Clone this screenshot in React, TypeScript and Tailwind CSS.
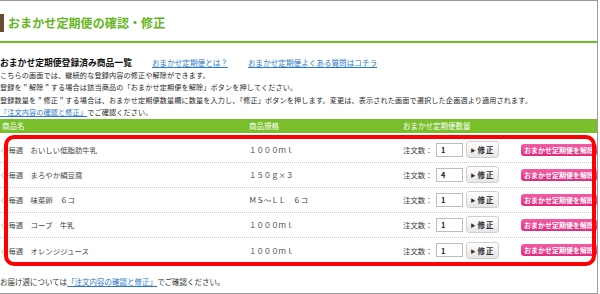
import React from 'react'

const rows = [
  { name: 'おいしい低脂肪牛乳', spec: '１０００ｍｌ', qty: '1' },
  { name: 'まろやか絹豆腐', spec: '１５０ｇ×３', qty: '4' },
  { name: '味菜卵　６コ', spec: 'ＭＳ～ＬＬ　６コ', qty: '1' },
  { name: 'コープ　牛乳', spec: '１０００ｍｌ', qty: '1' },
  { name: 'オレンジジュース', spec: '１０００ｍｌ', qty: '1' },
]

const font = { fontFamily: '"Noto Sans CJK JP", "Noto Sans", sans-serif' }

export default function App() {
  return (
    <div
      className="relative h-[294px] w-[598px] overflow-hidden border-t border-r border-b border-[#9a9a9a] bg-white text-[#333]"
      style={font}
    >
      {/* title */}
      <div className="flex h-[42px] items-start border-b-2 border-[#6cc21c] pt-[13px]">
        <div className="h-[18px] w-[4px] bg-[#6b4b30]" />
        <h1 className="ml-[4px] text-[12px] font-bold leading-[18px] tracking-[0.1px] text-[#63b521]">
          おまかせ定期便の確認・修正
        </h1>
      </div>

      {/* intro */}
      <div className="mt-[13px] flex h-[14px] items-center">
        <h2 className="w-[152px] text-[8.8px] font-bold leading-[14px] text-[#111]">おまかせ定期便登録済み商品一覧</h2>
        <a className="w-[96px] text-[7.6px] leading-[14px] text-[#2a78c8] underline">おまかせ定期便とは？</a>
        <a className="text-[7.6px] leading-[14px] text-[#2a78c8] underline">おまかせ定期便よくある質問はコチラ</a>
      </div>
      <div className="-mt-[1.5px] text-[7.15px] leading-[12.6px] tracking-[0.12px] whitespace-nowrap text-[#2a2a2a]">
        <p>こちらの画面では、継続的な登録内容の修正や解除ができます。</p>
        <p>登録を＂解除＂する場合は該当商品の「おまかせ定期便を解除」ボタンを押してください。</p>
        <p>登録数量を＂修正＂する場合は、おまかせ定期便数量欄に数量を入力し、「修正」ボタンを押します。変更は、表示された画面で選択した企画週より適用されます。</p>
        <p>
          <a className="text-[#2a78c8] underline">「注文内容の確認と修正」</a>でご確認ください。
        </p>
      </div>

      {/* table header */}
      <div className="flex h-[14px] items-center bg-[#78bf2b] text-[7.5px] leading-[14px] text-white">
        <div className="w-[249px] pl-[2px]">商品名</div>
        <div className="w-[154px]">商品規格</div>
        <div>おまかせ定期便数量</div>
      </div>

      {/* rows */}
      <div className="pt-[5px]">
        {rows.map((r, i) => (
          <div
            key={i}
            className={`flex h-[25px] items-center text-[7.4px] text-[#444] ${
              i < rows.length - 1 ? 'border-b border-dotted border-[#c8c8c8]' : ''
            }`}
          >
            <div className="w-[249px] whitespace-nowrap pl-[1px]">◇毎週　{r.name}</div>
            <div className="w-[154px] whitespace-nowrap">{r.spec}</div>
            <div className="flex items-center">
              <span className="w-[33px] whitespace-nowrap">注文数：</span>
              <div className="flex h-[14px] w-[27px] items-center border border-[#bdbdbd] bg-white pl-[4px] font-bold text-[#222]">
                {r.qty}
              </div>
              <button className="ml-[3px] flex h-[17px] w-[33px] items-center justify-center rounded-[3px] border border-[#cfcfcf] bg-gradient-to-b from-white to-[#e6e6e6] text-[7.5px] font-bold tracking-[1px] text-[#333]">
                <span className="mr-[1px] text-[5px]">▶</span>修正
              </button>
              <button className="ml-[22px] h-[12px] w-[76px] overflow-hidden whitespace-nowrap rounded-[3px] bg-gradient-to-b from-[#f45ba3] to-[#e2287e] pl-[3px] text-left text-[7px] font-bold leading-[12px] text-white">
                おまかせ定期便を解除
              </button>
            </div>
          </div>
        ))}
      </div>

      {/* footer */}
      <p className="mt-[13px] whitespace-nowrap text-[7.5px] leading-[12px]">
        お届け週については<a className="text-[#2a78c8] underline">「注文内容の確認と修正」</a>でご確認ください。
      </p>

      {/* red highlight overlay */}
      <div className="pointer-events-none absolute left-[4px] top-[134px] h-[131px] w-[592px] rounded-[10px] border-4 border-[#ff0000]" />
    </div>
  )
}
